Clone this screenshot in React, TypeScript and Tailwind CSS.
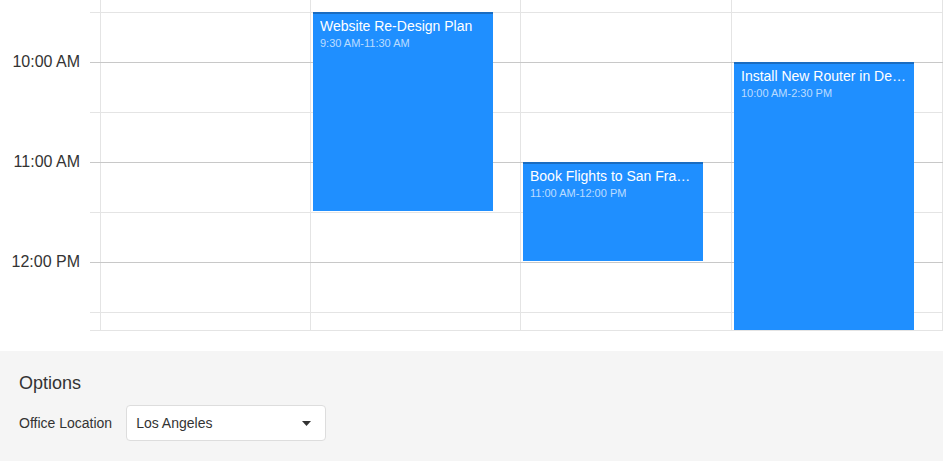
import React from 'react';

// half-hour rows, top to bottom; 'hour' rows get the darker line at their bottom edge
const rows = [
  { h: 'h-[13px]', line: 'border-[#e4e4e4]' },
  { h: 'h-[50px]', line: 'border-[#c8c8c8]' },
  { h: 'h-[50px]', line: 'border-[#e4e4e4]' },
  { h: 'h-[50px]', line: 'border-[#c8c8c8]' },
  { h: 'h-[50px]', line: 'border-[#e4e4e4]' },
  { h: 'h-[50px]', line: 'border-[#c8c8c8]' },
  { h: 'h-[50px]', line: 'border-[#e4e4e4]' },
  { h: 'h-[18px]', line: 'border-[#e4e4e4]' },
];

const hours = ['10:00 AM', '11:00 AM', '12:00 PM'];

const appointments = [
  { title: 'Website Re-Design Plan', time: '9:30 AM-11:30 AM', pos: 'left-[223px] top-[12px] h-[199px]' },
  { title: 'Book Flights to San Fran to Sales Trip', time: '11:00 AM-12:00 PM', pos: 'left-[433px] top-[162px] h-[99px]' },
  { title: 'Install New Router in Dev Room', time: '10:00 AM-2:30 PM', pos: 'left-[644px] top-[62px] h-[268px]' },
];

export default function App() {
  return (
    <div className="w-[943px] h-[461px] bg-white text-[#333] font-['Liberation_Sans',Arial,sans-serif] overflow-hidden">
      {/* Scheduler */}
      <div className="flex h-[331px]">
        <div className="w-[90px] shrink-0 pt-[12px] flex flex-col">
          {hours.map((h) => (
            <div key={h} className="h-[100px] flex items-center justify-end pr-[10px] text-[16px] leading-none">
              {h}
            </div>
          ))}
        </div>
        <div className="relative flex-1 overflow-hidden">
          {rows.map((r, i) => (
            <div key={i} className={`flex ${r.h} border-b ${r.line}`}>
              <div className="w-[10px] shrink-0" />
              <div className="grid grid-cols-[210px_210px_211px_212px]">
                <div className="border-l border-[#e4e4e4]" />
                <div className="border-l border-[#e4e4e4]" />
                <div className="border-l border-[#e4e4e4]" />
                <div className="border-l border-r border-[#e4e4e4]" />
              </div>
            </div>
          ))}
          {appointments.map((a) => (
            <div
              key={a.title}
              className={`absolute w-[180px] bg-[#1f8fff] border-t-2 border-[#1a6cc0] px-[7px] pt-[4px] ${a.pos}`}
            >
              <div className="text-[14px] leading-[17px] text-white truncate">{a.title}</div>
              <div className="mt-[1px] text-[11px] leading-[14px] text-white/70 truncate">{a.time}</div>
            </div>
          ))}
        </div>
      </div>

      {/* Options */}
      <div className="mt-[20px] h-[110px] bg-[#f5f5f5] px-[19px] pt-[20px]">
        <div className="text-[18px] leading-[24px]">Options</div>
        <div className="mt-[10px] flex items-center gap-[14px]">
          <div className="text-[14px] whitespace-nowrap">Office Location</div>
          <div className="w-[200px] h-[36px] bg-white border border-[#ddd] rounded-[4px] flex items-center justify-between pl-[9px] pr-[14px]">
            <span className="text-[14px]">Los Angeles</span>
            <svg width="9" height="5" viewBox="0 0 9 5">
              <path d="M0 0 L9 0 L4.5 5 Z" fill="#333" />
            </svg>
          </div>
        </div>
      </div>
    </div>
  );
}
